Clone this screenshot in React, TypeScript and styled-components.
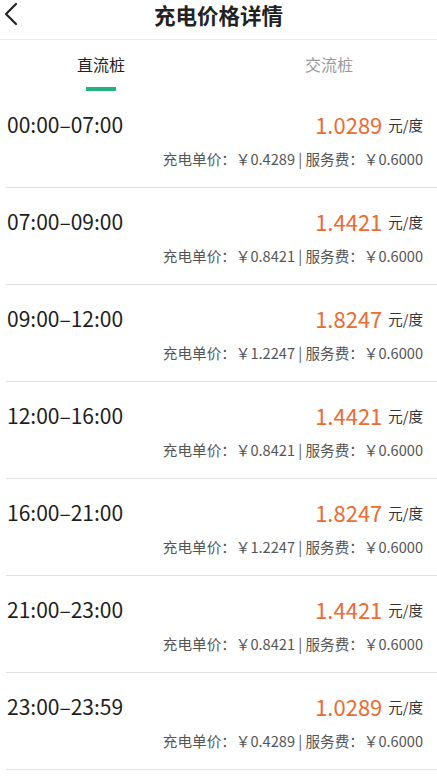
import React from 'react';
import styled, { createGlobalStyle } from 'styled-components';

interface IPriceRow {
  period: string;
  total: string;
  power: string;
  service: string;
}

const rows: IPriceRow[] = [
  { period: '00:00–07:00', total: '1.0289', power: '0.4289', service: '0.6000' },
  { period: '07:00–09:00', total: '1.4421', power: '0.8421', service: '0.6000' },
  { period: '09:00–12:00', total: '1.8247', power: '1.2247', service: '0.6000' },
  { period: '12:00–16:00', total: '1.4421', power: '0.8421', service: '0.6000' },
  { period: '16:00–21:00', total: '1.8247', power: '1.2247', service: '0.6000' },
  { period: '21:00–23:00', total: '1.4421', power: '0.8421', service: '0.6000' },
  { period: '23:00–23:59', total: '1.0289', power: '0.4289', service: '0.6000' },
];

const GlobalStyle = createGlobalStyle`
  html, body {
    margin: 0;
    padding: 0;
    background: #fff;
  }
  body {
    font-family: "Noto Sans CJK SC", "Noto Sans", sans-serif;
    color: #222;
  }
`;

export default function App() {
  return (
    <>
      <GlobalStyle />
      <StyledPage>
        <Header>
          <BackButton aria-label="返回">
            <svg width="16" height="24" viewBox="0 0 16 24" fill="none">
              <path d="M13 2 L3 12 L13 22" stroke="#222" strokeWidth="2.2" strokeLinecap="round" strokeLinejoin="round" />
            </svg>
          </BackButton>
          <Title>充电价格详情</Title>
        </Header>

        <Tabs>
          <Tab active>直流桩</Tab>
          <Tab>交流桩</Tab>
        </Tabs>

        <List>
          {rows.map((row, i) => (
            <Row key={i}>
              <TopLine>
                <Period>{row.period}</Period>
                <Price>
                  <Amount>{row.total}</Amount>
                  <Unit>元/度</Unit>
                </Price>
              </TopLine>
              <Detail>
                充电单价：￥{row.power} | 服务费：￥{row.service}
              </Detail>
            </Row>
          ))}
        </List>
      </StyledPage>
    </>
  );
}

const StyledPage = styled.div`
  width: 437px;
  min-height: 780px;
  background: #fff;
`;

const Header = styled.div`
  position: relative;
  height: 39px;
  display: flex;
  align-items: center;
  justify-content: center;
  border-bottom: 1px solid #ececec;
`;

const BackButton = styled.div`
  position: absolute;
  left: 3px;
  top: 2px;
  width: 16px;
  height: 24px;
`;

const Title = styled.h1`
  margin: 0 0 10px;
  font-size: 21.5px;
  font-weight: 700;
  color: #222;
  line-height: 28px;
`;

const Tabs = styled.div`
  display: flex;
  justify-content: space-between;
  padding: 0 84px 0 77px;
  height: 51px;
`;

const Tab = styled.div<{ active?: boolean }>`
  position: relative;
  font-size: 16px;
  line-height: 24px;
  padding-top: 12px;
  color: ${(p) => (p.active ? '#222' : '#999')};

  &::after {
    content: '';
    display: ${(p) => (p.active ? 'block' : 'none')};
    position: absolute;
    left: 50%;
    bottom: 0;
    width: 30px;
    height: 4px;
    margin-left: -15px;
    background: #22b384;
  }
`;

const List = styled.div`
  display: flex;
  flex-direction: column;
`;

const Row = styled.div`
  margin-left: 6px;
  padding: 19px 14px 18px 1px;
  border-bottom: 1px solid #e1e1e1;
  display: flex;
  flex-direction: column;
  gap: 11px;
`;

const TopLine = styled.div`
  display: flex;
  justify-content: space-between;
  align-items: center;
  height: 28px;
`;

const Period = styled.span`
  font-size: 21px;
  color: #1e1e1e;
`;

const Price = styled.span`
  display: flex;
  align-items: center;
  gap: 6px;
`;

const Amount = styled.span`
  font-size: 22px;
  color: #ee6a30;
`;

const Unit = styled.span`
  font-size: 14.5px;
  color: #333;
`;

const Detail = styled.div`
  align-self: flex-end;
  font-size: 14.6px;
  line-height: 20px;
  color: #555;
`;
